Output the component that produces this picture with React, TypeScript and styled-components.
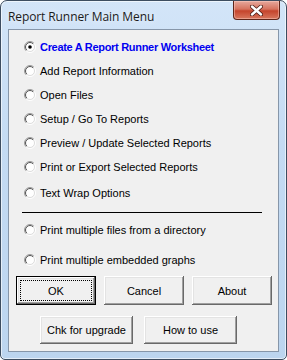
import React from "react";
import styled, { createGlobalStyle } from "styled-components";

const GlobalStyle = createGlobalStyle`
  html, body {
    margin: 0;
    padding: 0;
    background: #ffffff;
  }
  * {
    box-sizing: border-box;
  }
`;

const Window = styled.div`
  width: 287px;
  height: 360px;
  display: flex;
  flex-direction: column;
  padding: 0 7px 7px 7px;
  border: 1px solid #3d4d60;
  border-radius: 7px 7px 5px 5px;
  background: linear-gradient(180deg, #d3e5f8 0%, #c4dbf3 40%, #bcd5ef 100%);
  box-shadow: inset 0 0 0 1px rgba(255, 255, 255, 0.6);
  font-family: "Liberation Sans", Arial, sans-serif;
`;

const TitleBar = styled.div`
  height: 28px;
  display: flex;
  align-items: flex-start;
  justify-content: space-between;
`;

const Title = styled.div`
  margin-top: 7px;
  font-family: "Open Sans", "Liberation Sans", sans-serif;
  font-size: 12px;
  color: #1b1b1b;
  text-shadow: 0 0 6px rgba(255, 255, 255, 0.9);
  letter-spacing: -0.1px;
`;

const CloseButton = styled.div`
  width: 47px;
  height: 19px;
  margin-right: -1px;
  display: flex;
  align-items: center;
  justify-content: center;
  border: 1px solid #5e2519;
  border-top: none;
  border-radius: 0 0 4px 4px;
  background: linear-gradient(180deg, #e6a99d 0%, #d6735f 45%, #c5442c 55%, #d8775e 100%);
  box-shadow: inset 0 0 0 1px rgba(255, 210, 200, 0.45);
`;

const Client = styled.div`
  flex: 1;
  display: flex;
  flex-direction: column;
  padding-top: 5px;
  border: 1px solid #8696a9;
  background: #f0f0f0;
  font-size: 11px;
  color: #000;
`;

const OptionList = styled.div`
  display: flex;
  flex-direction: column;
  padding-left: 15px;
`;

const OptionRow = styled.label<{ $above?: number }>`
  height: 24px;
  margin-top: ${(p) => p.$above ?? 0}px;
  display: flex;
  align-items: center;
  gap: 4px;
`;

const OptionText = styled.span<{ $strong?: boolean }>`
  font-weight: ${(p) => (p.$strong ? 700 : 400)};
  color: ${(p) => (p.$strong ? "#0000f0" : "#000")};
  letter-spacing: ${(p) => (p.$strong ? "-0.3px" : "0")};
  white-space: nowrap;
`;

const Divider = styled.div`
  width: 240px;
  height: 1px;
  margin: 7px 0 0 13px;
  background: #000;
`;

const ButtonRow = styled.div<{ $left: number; $gap: number; $above: number }>`
  display: flex;
  gap: ${(p) => p.$gap}px;
  padding-left: ${(p) => p.$left}px;
  margin-top: ${(p) => p.$above}px;
`;

const Button = styled.div<{ $w: number; $h: number; $default?: boolean }>`
  position: relative;
  width: ${(p) => p.$w}px;
  height: ${(p) => p.$h}px;
  display: flex;
  align-items: center;
  justify-content: center;
  background: #f0f0f0;
  border: ${(p) => (p.$default ? "1px solid #000" : "none")};
  box-shadow: inset -1px -1px 0 #696969, inset 1px 1px 0 #ffffff,
    inset -2px -2px 0 #a0a0a0, inset 2px 2px 0 #e3e3e3;
  font-size: 11px;
  color: #000;
`;

const FocusRing = styled.div`
  position: absolute;
  inset: 3px;
  border: 1px dotted #000;
`;

const RadioMark = ({ checked }: { checked?: boolean }) => (
  <svg width="12" height="12" viewBox="0 0 12 12">
    <defs>
      <linearGradient id="ro" x1="0" y1="0" x2="1" y2="1">
        <stop offset="0.45" stopColor="#9a9a9a" />
        <stop offset="0.55" stopColor="#ffffff" />
      </linearGradient>
      <linearGradient id="ri" x1="0" y1="0" x2="1" y2="1">
        <stop offset="0.45" stopColor="#505050" />
        <stop offset="0.55" stopColor="#dcdcdc" />
      </linearGradient>
    </defs>
    <circle cx="6" cy="6" r="5.5" fill="none" stroke="url(#ro)" strokeWidth="1" />
    <circle cx="6" cy="6" r="4.5" fill="#ffffff" stroke="url(#ri)" strokeWidth="1" />
    {checked && <circle cx="6" cy="6" r="1.8" fill="#000" />}
  </svg>
);

const CloseGlyph = () => (
  <svg width="13" height="11" viewBox="0 0 13 11">
    <path d="M2 1.5 L11 9.5 M11 1.5 L2 9.5" stroke="#4a1a12" strokeWidth="4" strokeLinecap="round" />
    <path d="M2 1.5 L11 9.5 M11 1.5 L2 9.5" stroke="#ffffff" strokeWidth="2.4" strokeLinecap="round" />
  </svg>
);

const options = [
  { text: "Create A Report Runner Worksheet", strong: true, checked: true },
  { text: "Add Report Information" },
  { text: "Open Files" },
  { text: "Setup / Go To Reports" },
  { text: "Preview / Update Selected Reports" },
  { text: "Print or Export Selected Reports" },
  { text: "Text Wrap Options", above: 2 },
];

export default function App() {
  return (
    <>
      <GlobalStyle />
      <Window>
        <TitleBar>
          <Title>Report Runner Main Menu</Title>
          <CloseButton>
            <CloseGlyph />
          </CloseButton>
        </TitleBar>
        <Client>
          <OptionList>
            {options.map((o) => (
              <OptionRow key={o.text} $above={o.above}>
                <RadioMark checked={o.checked} />
                <OptionText $strong={o.strong}>{o.text}</OptionText>
              </OptionRow>
            ))}
          </OptionList>
          <Divider />
          <OptionList>
            <OptionRow $above={5}>
              <RadioMark />
              <OptionText>Print multiple files from a directory</OptionText>
            </OptionRow>
            <OptionRow $above={6}>
              <RadioMark />
              <OptionText>Print multiple embedded graphs</OptionText>
            </OptionRow>
          </OptionList>
          <ButtonRow $left={7} $gap={8} $above={4}>
            <Button $w={80} $h={29} $default>
              <FocusRing />
              OK
            </Button>
            <Button $w={80} $h={29}>Cancel</Button>
            <Button $w={80} $h={29}>About</Button>
          </ButtonRow>
          <ButtonRow $left={31} $gap={11} $above={11}>
            <Button $w={93} $h={28}>Chk for upgrade</Button>
            <Button $w={93} $h={28}>How to use</Button>
          </ButtonRow>
        </Client>
      </Window>
    </>
  );
}
